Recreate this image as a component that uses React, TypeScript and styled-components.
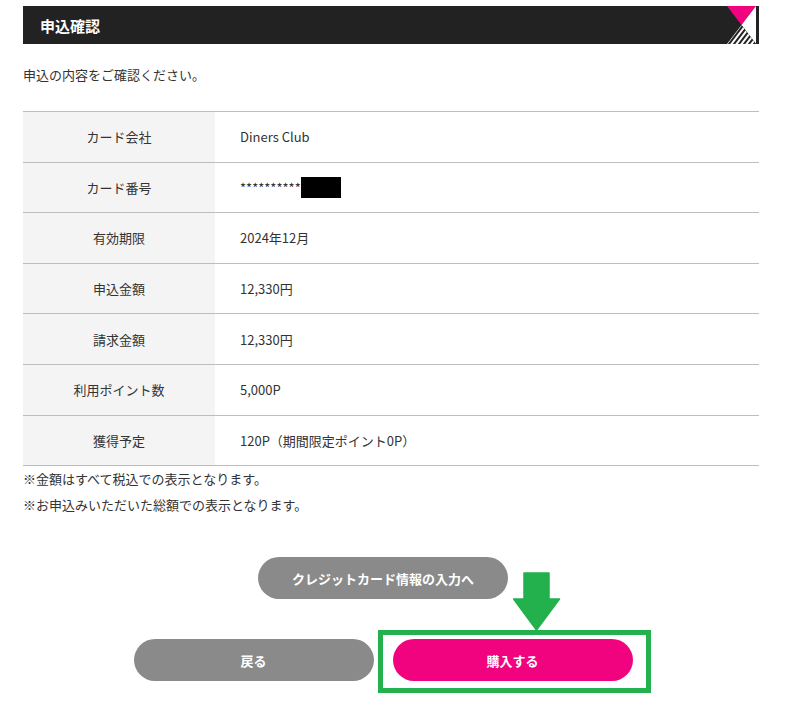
import React from "react";
import styled, { createGlobalStyle } from "styled-components";

const GlobalStyle = createGlobalStyle`
  html, body { margin: 0; padding: 0; background: #fff; }
  body {
    font-family: "Noto Sans CJK JP", "Noto Sans", sans-serif;
    color: #333;
    -webkit-font-smoothing: antialiased;
  }
`;

const Page = styled.div`
  padding: 6px 37px 34px 23px;
  width: 736px;
`;

const HeaderBar = styled.div`
  position: relative;
  height: 38px;
  background: #222;
  display: flex;
  align-items: center;
  padding-left: 17px;
`;

const Title = styled.h1`
  margin: 0;
  font-size: 15px;
  font-weight: 700;
  color: #fff;
  letter-spacing: 0;
`;

const Corner = styled.svg`
  position: absolute;
  right: 1px;
  top: 0;
  display: block;
`;

const Intro = styled.p`
  margin: 21px 0 0;
  font-size: 13px;
  line-height: 20px;
`;

const Table = styled.div`
  margin-top: 26px;
  border-top: 1px solid #bdbdbd;
  display: grid;
  grid-template-columns: 192px 1fr;
`;

const Label = styled.div`
  background: #f4f4f4;
  height: 49.6px;
  border-bottom: 1px solid #bdbdbd;
  display: flex;
  align-items: center;
  justify-content: center;
  font-size: 13px;
`;

const Value = styled.div`
  height: 49.6px;
  border-bottom: 1px solid #bdbdbd;
  display: flex;
  align-items: center;
  padding-left: 25px;
  font-size: 13px;
`;

const Mask = styled.span`
  display: inline-block;
  width: 40px;
  height: 21px;
  background: #000;
`;

const Notes = styled.div`
  font-size: 13px;
  line-height: 26px;
`;

const Actions = styled.div`
  margin-top: 39px;
  margin-right: 16px;
  display: flex;
  flex-direction: column;
  align-items: center;
  gap: 40px;
`;

const Pill = styled.button<{ $tone: "gray" | "pink"; $w: number }>`
  width: ${(p) => p.$w}px;
  height: 42px;
  border: none;
  border-radius: 21px;
  background: ${(p) => (p.$tone === "pink" ? "#f1037f" : "#8a8a8a")};
  color: #fff;
  font-family: "Noto Sans CJK JP", sans-serif;
  font-size: 13px;
  font-weight: 700;
  padding: 0;
  cursor: pointer;
`;

const ButtonRow = styled.div`
  position: relative;
  display: flex;
  justify-content: center;
  gap: 19px;
  width: 720px;
`;

const Highlight = styled.div`
  position: absolute;
  left: 355px;
  top: -9px;
  width: 273px;
  height: 63px;
  box-sizing: border-box;
  border: 5px solid #22b14c;
  pointer-events: none;
`;

const Arrow = styled.svg`
  position: absolute;
  left: 490px;
  top: -67px;
  display: block;
`;

const rows: { label: string; value: React.ReactNode }[] = [
  { label: "カード会社", value: "Diners Club" },
  {
    label: "カード番号",
    value: (
      <>
        <span>**********</span>
        <Mask />
      </>
    ),
  },
  { label: "有効期限", value: "2024年12月" },
  { label: "申込金額", value: "12,330円" },
  { label: "請求金額", value: "12,330円" },
  { label: "利用ポイント数", value: "5,000P" },
  { label: "獲得予定", value: "120P（期間限定ポイント0P）" },
];

export default function App() {
  const stripes = [-12, -7, -2, 3, 8, 13, 18, 23];
  return (
    <>
      <GlobalStyle />
      <Page>
        <HeaderBar>
          <Title>申込確認</Title>
          <Corner width="31" height="38" viewBox="0 0 31 38">
            <defs>
              <clipPath id="btri">
                <polygon points="0,38 29,38 14.5,19" />
              </clipPath>
            </defs>
            <polygon points="0,0 29,0 14.5,19" fill="#f1037f" />
            <polygon points="29,0 29,38 14.5,19" fill="#fff" />
            <polygon points="0,38 29,38 14.5,19" fill="#222" />
            <g clipPath="url(#btri)" stroke="#fff" strokeWidth="2">
              {stripes.map((x) => (
                <line key={x} x1={x} y1={40} x2={x + 16} y2={19} />
              ))}
            </g>
            <rect x="29" y="0" width="2" height="38" fill="#222" />
          </Corner>
        </HeaderBar>
        <Intro>申込の内容をご確認ください。</Intro>
        <Table>
          {rows.map((r) => (
            <React.Fragment key={r.label}>
              <Label>{r.label}</Label>
              <Value>{r.value}</Value>
            </React.Fragment>
          ))}
        </Table>
        <Notes>
          <div>※金額はすべて税込での表示となります。</div>
          <div>※お申込みいただいた総額での表示となります。</div>
        </Notes>
        <Actions>
          <Pill $tone="gray" $w={250}>
            クレジットカード情報の入力へ
          </Pill>
          <ButtonRow>
            <Pill $tone="gray" $w={240}>
              戻る
            </Pill>
            <Pill $tone="pink" $w={240}>
              購入する
            </Pill>
            <Highlight />
            <Arrow width="48" height="59" viewBox="0 0 48 59">
              <path
                d="M11 1 H36 V27 H46.5 L23.5 58 L0.5 27 H11 Z"
                fill="#22b14c"
                stroke="#22b14c"
                strokeWidth="1.5"
                strokeLinejoin="round"
              />
            </Arrow>
          </ButtonRow>
        </Actions>
      </Page>
    </>
  );
}
